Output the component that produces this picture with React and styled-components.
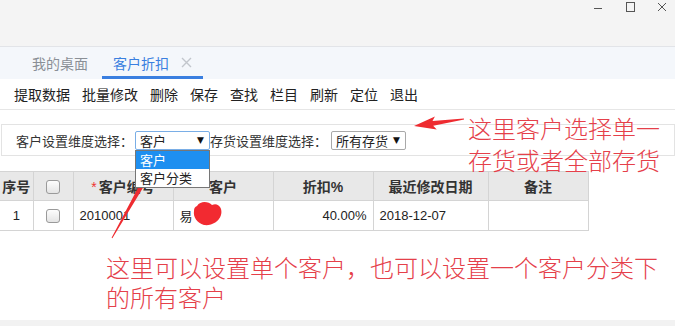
import styled, { createGlobalStyle } from 'styled-components';

const GlobalStyle = createGlobalStyle`
  html, body {
    margin: 0;
    padding: 0;
    background: #fff;
  }
  body {
    width: 675px;
    height: 326px;
    overflow: hidden;
    font-family: "Noto Sans CJK SC", "Liberation Sans", sans-serif;
  }
`;

const toolbarItems = ['提取数据', '批量修改', '删除', '保存', '查找', '栏目', '刷新', '定位', '退出'];

const columns = [
    { key: 'no', title: '序号', width: 33 },
    { key: 'check', title: '', width: 40 },
    { key: 'code', title: '客户编号', width: 100, required: true },
    { key: 'name', title: '客户', width: 100 },
    { key: 'rate', title: '折扣%', width: 100 },
    { key: 'date', title: '最近修改日期', width: 115 },
    { key: 'memo', title: '备注', width: 100 },
];

// tapered arrow like the screenshot tool draws
const arrowPoints = (tail, tip, headLen, headW, neckW, tailW) => {
    const dx = tip[0] - tail[0];
    const dy = tip[1] - tail[1];
    const len = Math.hypot(dx, dy);
    const ux = dx / len;
    const uy = dy / len;
    const nx = -uy;
    const ny = ux;
    const nk = [tip[0] - ux * headLen, tip[1] - uy * headLen];
    const bk = [tip[0] - ux * (headLen + 3), tip[1] - uy * (headLen + 3)];
    const p = (b, w) => `${(b[0] + nx * w).toFixed(1)},${(b[1] + ny * w).toFixed(1)}`;
    return [
        p(tail, tailW / 2),
        p(nk, neckW / 2),
        p(bk, headW / 2),
        `${tip[0]},${tip[1]}`,
        p(bk, -headW / 2),
        p(nk, -neckW / 2),
        p(tail, -tailW / 2),
    ].join(' ');
};

const App = () => {
    return (
        <Page>
            <GlobalStyle />
            <TitleBar>
                <WinControls>
                    <svg width="12" height="12" viewBox="0 0 12 12">
                        <line x1="2" y1="7.5" x2="10" y2="7.5" stroke="#555" strokeWidth="1" />
                    </svg>
                    <svg width="12" height="12" viewBox="0 0 12 12">
                        <rect x="2.5" y="1.5" width="8" height="9" fill="none" stroke="#555" strokeWidth="1" />
                    </svg>
                    <svg width="12" height="12" viewBox="0 0 12 12">
                        <path d="M2 2 L10 10 M10 2 L2 10" stroke="#555" strokeWidth="1" />
                    </svg>
                </WinControls>
            </TitleBar>

            <TabBar>
                <Tab>我的桌面</Tab>
                <Tab active>
                    客户折扣
                    <svg width="11" height="11" viewBox="0 0 11 11">
                        <path d="M1 1 L10 10 M10 1 L1 10" stroke="#c2c6cc" strokeWidth="1.4" />
                    </svg>
                </Tab>
            </TabBar>

            <Toolbar>
                {toolbarItems.map((t) => (
                    <ToolButton key={t}>{t}</ToolButton>
                ))}
            </Toolbar>

            <FilterBox>
                <FilterLabel>客户设置维度选择：</FilterLabel>
                <SelectWrap gap={2}>
                    <Select focused>
                        客户
                        <Caret>▼</Caret>
                    </Select>
                    <OptionList>
                        <Option selected>客户</Option>
                        <Option>客户分类</Option>
                    </OptionList>
                </SelectWrap>
                <FilterLabel>存货设置维度选择：</FilterLabel>
                <SelectWrap gap={4}>
                    <Select>
                        所有存货
                        <Caret>▼</Caret>
                    </Select>
                </SelectWrap>
            </FilterBox>

            <Table>
                <colgroup>
                    {columns.map((c) => (
                        <col key={c.key} style={{ width: c.width }} />
                    ))}
                </colgroup>
                <thead>
                    <tr>
                        {columns.map((c) => (
                            <Th key={c.key}>
                                {c.key === 'check' ? <CheckBox /> : null}
                                {c.required ? <Star>*</Star> : null}
                                {c.title}
                            </Th>
                        ))}
                    </tr>
                </thead>
                <tbody>
                    <tr>
                        <Td align="center">1</Td>
                        <Td align="center"><CheckBox /></Td>
                        <Td>2010001</Td>
                        <Td>易</Td>
                        <Td align="right">40.00%</Td>
                        <Td>2018-12-07</Td>
                        <Td></Td>
                    </tr>
                </tbody>
            </Table>

            <Spacer />
            <BottomBand />

            <Marks width="675" height="326" viewBox="0 0 675 326">
                <path
                    d="M197 206 C201 200 209 202 212 205 C218 202 223 208 221 215 C219 222 211 226 204 225 C197 223 193 217 194 211 C194 208 195 207 197 206 Z"
                    fill="#f22a31"
                />
                <polygon points={arrowPoints([112, 238], [158, 157], 24, 14, 5, 1)} fill="#ee2b30" />
                <polygon points={arrowPoints([464, 119], [414, 126], 19, 13, 5, 1)} fill="#ee2b30" />
            </Marks>

            <Note top={112} left={468} size={24} lh={32}>
                这里客户选择单一
                <br />
                存货或者全部存货
            </Note>
            <Note top={252} left={106} size={24} lh={30}>
                这里可以设置单个客户，也可以设置一个客户分类下
                <br />
                的所有客户
            </Note>
        </Page>
    );
};

const Page = styled.div`
    position: relative;
    width: 675px;
    height: 326px;
    display: flex;
    flex-direction: column;
    background: #fff;
    overflow: hidden;
`;

const TitleBar = styled.div`
    height: 46px;
    background: #f4f4f4;
    border-bottom: 1px solid #e2e4e8;
    display: flex;
    justify-content: flex-end;
    align-items: flex-start;
`;

const WinControls = styled.div`
    display: flex;
    gap: 20px;
    padding: 1px 7px 0 0;
`;

const TabBar = styled.div`
    height: 32px;
    background: #f4f7fb;
    display: flex;
    align-items: stretch;
    padding-left: 18px;
`;

const Tab = styled.div`
    display: flex;
    align-items: center;
    gap: 12px;
    padding: 2px ${(p) => (p.active ? '11px' : '14px')} 0;
    font-size: 14px;
    color: ${(p) => (p.active ? '#3a7fe0' : '#8a8f96')};
    border-bottom: 3px solid ${(p) => (p.active ? '#3a7fe0' : 'transparent')};
    box-sizing: border-box;
    ${(p) => (p.active ? 'width: 101px;' : '')}
`;

const Toolbar = styled.div`
    height: 30px;
    display: flex;
    align-items: center;
    gap: 12px;
    padding-left: 14px;
    border-bottom: 1px solid #e6e6e6;
    background: #fff;
`;

const ToolButton = styled.span`
    font-size: 14px;
    color: #222;
    cursor: pointer;
`;

const FilterBox = styled.div`
    margin: 14px 0 0 1px;
    height: 30px;
    border: 1px solid #e3e3e3;
    display: flex;
    align-items: center;
    padding-left: 14px;
`;

const FilterLabel = styled.span`
    font-size: 13px;
    color: #333;
`;

const SelectWrap = styled.div`
    position: relative;
    margin-left: ${(p) => p.gap || 0}px;
`;

const Select = styled.div`
    width: 75px;
    height: 19px;
    box-sizing: border-box;
    border: 1px solid ${(p) => (p.focused ? '#7aaee6' : '#a9a9a9')};
    border-radius: 2px;
    font-size: 13px;
    line-height: 17px;
    color: #222;
    padding-left: 4px;
    display: flex;
    justify-content: space-between;
    align-items: center;
    background: #fff;
`;

const Caret = styled.span`
    font-size: 9px;
    color: #111;
    margin-right: 5px;
    font-family: "DejaVu Sans", sans-serif;
`;

const OptionList = styled.div`
    position: absolute;
    left: 0;
    top: 19px;
    width: 75px;
    box-sizing: border-box;
    border: 1px solid #767676;
    background: #fff;
    z-index: 2;
`;

const Option = styled.div`
    height: 18px;
    line-height: 18px;
    font-size: 13px;
    padding-left: 4px;
    color: ${(p) => (p.selected ? '#fff' : '#222')};
    background: ${(p) => (p.selected ? '#1e8ff0' : '#fff')};
`;

const Table = styled.table`
    margin-top: 15px;
    width: 588px;
    border-collapse: collapse;
    table-layout: fixed;
    font-family: "Liberation Sans", "Noto Sans CJK SC", sans-serif;
`;

const Th = styled.th`
    height: 28px;
    background: #e8e8e8;
    border: 1px solid #d4d4d4;
    font-size: 14px;
    font-weight: bold;
    color: #333;
    text-align: center;
    padding: 0;
    white-space: nowrap;
    &:first-child {
        border-left: none;
    }
`;

const Td = styled.td`
    height: 29px;
    border: 1px solid #d4d4d4;
    font-size: 13px;
    color: #222;
    padding: 0 6px;
    text-align: ${(p) => p.align || 'left'};
    white-space: nowrap;
    &:first-child {
        border-left: none;
    }
`;

const Star = styled.span`
    color: #e33;
    font-weight: normal;
    margin-right: 2px;
`;

const CheckBox = styled.span`
    display: inline-block;
    width: 12px;
    height: 12px;
    border: 1px solid #9a9a9a;
    border-radius: 3px;
    background: linear-gradient(#fdfdfd, #e4e4e4);
    vertical-align: middle;
`;

const Spacer = styled.div`
    flex: 1;
`;

const BottomBand = styled.div`
    height: 6px;
    background: #f2f2f2;
`;

const Marks = styled.svg`
    position: absolute;
    left: 0;
    top: 0;
    pointer-events: none;
`;

const Note = styled.div`
    position: absolute;
    top: ${(p) => p.top}px;
    left: ${(p) => p.left}px;
    font-size: ${(p) => p.size}px;
    line-height: ${(p) => p.lh}px;
    color: #e5404a;
    font-weight: 300;
    white-space: nowrap;
    font-family: "Noto Sans CJK SC", sans-serif;
`;

export default App;
